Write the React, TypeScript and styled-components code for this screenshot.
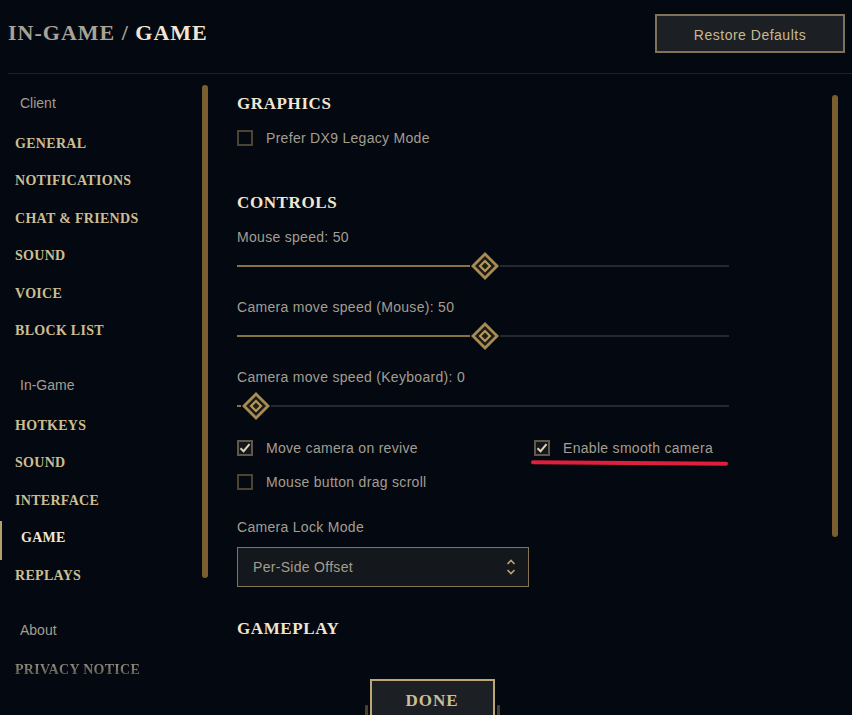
import styled, { createGlobalStyle } from 'styled-components'

const GlobalStyle = createGlobalStyle`
    html, body {
        margin: 0;
        padding: 0;
        background: #030811;
    }
    body {
        font-family: 'Liberation Sans', Arial, sans-serif;
    }
    * {
        box-sizing: border-box;
    }
`

const Page = styled.div`
    position: relative;
    width: 852px;
    height: 715px;
    overflow: hidden;
    background: #030811;
    display: flex;
    flex-direction: column;
`
const Header = styled.header`
    height: 74px;
    flex-shrink: 0;
    margin-left: 8px;
    padding-right: 7px;
    border-bottom: 1px solid #1c2129;
    display: flex;
    align-items: flex-start;
    justify-content: space-between;
`
const Title = styled.h1`
    margin: 21px 0 0 0;
    font-family: 'Liberation Serif', serif;
    font-weight: 700;
    font-size: 22px;
    line-height: 24px;
    letter-spacing: 1px;
    color: #a8a395;
    span {
        color: #f0e6d2;
    }
`
const RestoreButton = styled.button`
    margin-top: 14px;
    width: 190px;
    height: 39px;
    background: #1c1f24;
    border: 2px solid #7f7256;
    color: #c9b98e;
    font-family: 'Liberation Sans', Arial, sans-serif;
    font-size: 14px;
    letter-spacing: 0.5px;
    padding: 0;
    padding-top: 3px;
`
const Body = styled.div`
    flex: 1;
    display: flex;
    min-height: 0;
`
const Sidebar = styled.nav`
    width: 202px;
    padding: 18px 0 0 15px;
`
const Group = styled.div`
    & + & {
        margin-top: 24.25px;
    }
`
const GroupLabel = styled.div`
    padding-left: 5px;
    font-size: 14px;
    line-height: 22px;
    color: #a39e90;
    margin-bottom: 10.75px;
`
const NavItem = styled.div<{ $active?: boolean; $faded?: boolean }>`
    position: relative;
    height: 37.5px;
    line-height: 37.5px;
    padding-left: ${(p) => (p.$active ? '6px' : '0')};
    font-family: 'Liberation Serif', serif;
    font-weight: 700;
    font-size: 14px;
    letter-spacing: 0.3px;
    color: ${(p) => (p.$active ? '#f0e6d2' : '#cdbe91')};
    ${(p) =>
        p.$faded &&
        `
        background: linear-gradient(180deg, #9a9484 30%, #3f3d36 80%);
        -webkit-background-clip: text;
        background-clip: text;
        color: transparent;
        width: max-content;
    `}
    ${(p) =>
        p.$active &&
        `
        &::before {
            content: '';
            position: absolute;
            left: -15px;
            top: 2px;
            width: 2px;
            height: 39px;
            background: #b49e6c;
        }
    `}
`
const ScrollThumb = styled.div<{ $top: number; $height: number }>`
    width: 6px;
    flex-shrink: 0;
    margin-top: ${(p) => p.$top}px;
    height: ${(p) => p.$height}px;
    border-radius: 3px;
    background: #7a5e2f;
`
const Content = styled.div`
    flex: 1;
    display: flex;
    padding-right: 14px;
`
const Main = styled.main`
    position: relative;
    flex: 1;
    padding: 19px 0 0 29px;
    &::after {
        content: '';
        position: absolute;
        left: 0;
        right: 0;
        bottom: 0;
        height: 80px;
        background: linear-gradient(180deg, rgba(3, 8, 17, 0) 0%, #030811 45%);
    }
`
const SectionTitle = styled.h2<{ $gap?: number }>`
    margin: ${(p) => p.$gap ?? 0}px 0 0 0;
    font-family: 'Liberation Serif', serif;
    font-weight: 700;
    font-size: 17px;
    line-height: 22px;
    letter-spacing: 0.6px;
    color: #f0e6d2;
`
const FieldLabel = styled.div<{ $gap?: number }>`
    margin-top: ${(p) => p.$gap ?? 0}px;
    font-size: 14px;
    line-height: 20px;
    letter-spacing: 0.3px;
    color: #a39e90;
`
const Field = styled.div<{ $gap: number }>`
    margin-top: ${(p) => p.$gap}px;
`
const SliderTrack = styled.div`
    margin-top: 4px;
    width: 492px;
    height: 30px;
    display: flex;
    align-items: center;
`
const SliderFill = styled.div`
    height: 2px;
    background: #8a7142;
    flex-shrink: 0;
`
const SliderRest = styled.div`
    flex: 1;
    height: 2px;
    background: #252a30;
`
const Thumb = styled.svg`
    width: 30px;
    height: 30px;
    flex-shrink: 0;
    display: block;
`
const CheckGrid = styled.div<{ $gap: number }>`
    margin-top: ${(p) => p.$gap}px;
    display: grid;
    grid-template-columns: 297px 1fr;
    row-gap: 10px;
`
const CheckRow = styled.label<{ $gap?: number }>`
    position: relative;
    margin-top: ${(p) => p.$gap ?? 0}px;
    height: 24px;
    display: flex;
    align-items: center;
    gap: 13px;
    font-size: 14px;
    letter-spacing: 0.3px;
    color: #a39e90;
`
const Box = styled.span<{ $checked?: boolean }>`
    width: 16px;
    height: 16px;
    flex-shrink: 0;
    border: 2px solid ${(p) => (p.$checked ? '#5f5849' : '#4c4330')};
    background: ${(p) => (p.$checked ? '#15161a' : 'transparent')};
    display: flex;
    align-items: center;
    justify-content: center;
`
const Underline = styled.span`
    position: absolute;
    left: -3px;
    top: 25px;
    width: 197px;
    height: 4px;
    border-radius: 2px;
    background: #e01f3d;
    transform: rotate(0.4deg);
`
const Select = styled.div`
    margin-top: 10px;
    width: 292px;
    height: 40px;
    border: 1px solid #85744f;
    background: #14171b;
    display: flex;
    align-items: center;
    justify-content: space-between;
    padding: 0 12px 0 15px;
    font-size: 14px;
    letter-spacing: 0.3px;
    color: #a39e90;
`
const Footer = styled.footer`
    position: absolute;
    left: 0;
    right: 0;
    bottom: 0;
    height: 36px;
    display: flex;
    justify-content: center;
    padding-left: 12px;
`
const DoneButton = styled.button`
    position: relative;
    width: 125px;
    height: 44px;
    flex-shrink: 0;
    background: #1c1f24;
    border: 2px solid #bda772;
    color: #cdbe91;
    font-family: 'Liberation Serif', serif;
    font-weight: 700;
    font-size: 17px;
    letter-spacing: 1px;
    line-height: 36px;
    padding: 0;
    align-self: flex-start;
    &::before,
    &::after {
        content: '';
        position: absolute;
        top: 24px;
        width: 3px;
        height: 20px;
        background: #4a4130;
        border-radius: 1px;
    }
    &::before {
        left: -7px;
    }
    &::after {
        right: -7px;
    }
`

const SliderThumb = () => (
    <Thumb viewBox="0 0 30 30">
        <polygon points="15,1 29,15 15,29 1,15" fill="#a78b52" />
        <polygon points="15,5 25,15 15,25 5,15" fill="#1b1a16" />
        <polygon points="15,8.5 21.5,15 15,21.5 8.5,15" fill="#b59a5e" />
        <polygon points="15,11.5 18.5,15 15,18.5 11.5,15" fill="#241f15" />
    </Thumb>
)

const Slider = ({ label, value, gap }: { label: string; value: number; gap: number }) => (
    <Field $gap={gap}>
        <FieldLabel>
            {label}: {value}
        </FieldLabel>
        <SliderTrack>
            <SliderFill style={{ width: 4 + value * 4.57 }} />
            <SliderThumb />
            <SliderRest />
        </SliderTrack>
    </Field>
)

const Check = ({ label, checked, gap, marked }: { label: string; checked?: boolean; gap?: number; marked?: boolean }) => (
    <CheckRow $gap={gap}>
        <Box $checked={checked}>
            {checked && (
                <svg width="12" height="12" viewBox="0 0 12 12">
                    <path d="M1.5 6.2 L4.6 9.2 L10.5 2.2" fill="none" stroke="#dcd3bd" strokeWidth="2" />
                </svg>
            )}
        </Box>
        {label}
        {marked && <Underline />}
    </CheckRow>
)

const clientItems = ['General', 'Notifications', 'Chat & Friends', 'Sound', 'Voice', 'Block List']
const gameItems = ['Hotkeys', 'Sound', 'Interface', 'Game', 'Replays']

const App = () => {
    return (
        <Page>
            <GlobalStyle />
            <Header>
                <Title>
                    IN-GAME / <span>GAME</span>
                </Title>
                <RestoreButton>Restore Defaults</RestoreButton>
            </Header>
            <Body>
                <Sidebar>
                    <Group>
                        <GroupLabel>Client</GroupLabel>
                        {clientItems.map((item) => (
                            <NavItem key={item}>{item.toUpperCase()}</NavItem>
                        ))}
                    </Group>
                    <Group>
                        <GroupLabel>In-Game</GroupLabel>
                        {gameItems.map((item) => (
                            <NavItem key={item} $active={item === 'Game'}>
                                {item.toUpperCase()}
                            </NavItem>
                        ))}
                    </Group>
                    <Group>
                        <GroupLabel>About</GroupLabel>
                        <NavItem $faded>PRIVACY NOTICE</NavItem>
                    </Group>
                </Sidebar>
                <ScrollThumb $top={11} $height={493} />
                <Content>
                    <Main>
                        <SectionTitle>GRAPHICS</SectionTitle>
                        <Check label="Prefer DX9 Legacy Mode" gap={11} />
                        <SectionTitle $gap={42}>CONTROLS</SectionTitle>
                        <Slider label="Mouse speed" value={50} gap={13} />
                        <Slider label="Camera move speed (Mouse)" value={50} gap={16} />
                        <Slider label="Camera move speed (Keyboard)" value={0} gap={16} />
                        <CheckGrid $gap={15}>
                            <Check label="Move camera on revive" checked />
                            <Check label="Enable smooth camera" checked marked />
                            <Check label="Mouse button drag scroll" />
                        </CheckGrid>
                        <FieldLabel $gap={23}>Camera Lock Mode</FieldLabel>
                        <Select>
                            Per-Side Offset
                            <svg width="10" height="18" viewBox="0 0 10 18">
                                <path d="M1.5 6 L5 2.5 L8.5 6" fill="none" stroke="#b9a46f" strokeWidth="1.6" />
                                <path d="M1.5 12 L5 15.5 L8.5 12" fill="none" stroke="#b9a46f" strokeWidth="1.6" />
                            </svg>
                        </Select>
                        <SectionTitle $gap={31}>GAMEPLAY</SectionTitle>
                    </Main>
                    <ScrollThumb $top={21} $height={442} />
                </Content>
            </Body>
            <Footer>
                <DoneButton>DONE</DoneButton>
            </Footer>
        </Page>
    )
}

export default App
